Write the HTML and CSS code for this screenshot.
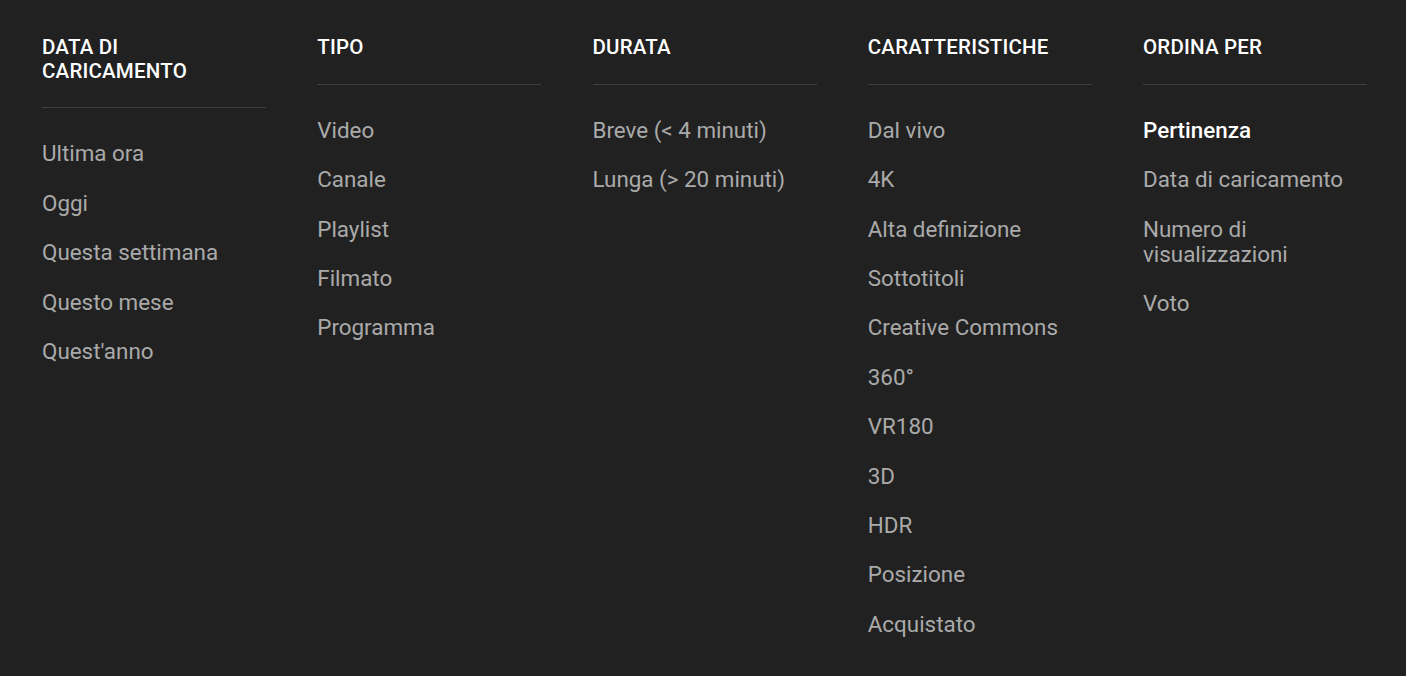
FILE: index.html
```html
<!DOCTYPE html>
<html lang="it">
<head>
<meta charset="utf-8">
<title>Filtri di ricerca</title>
<link rel="stylesheet" href="styles.css">
</head>
<body>
<div class="filters">
  <div class="group">
    <h4 class="group-title">Data di caricamento</h4>
    <ul class="options">
      <li class="option">Ultima ora</li>
      <li class="option">Oggi</li>
      <li class="option">Questa settimana</li>
      <li class="option">Questo mese</li>
      <li class="option">Quest'anno</li>
    </ul>
  </div>
  <div class="group">
    <h4 class="group-title">Tipo</h4>
    <ul class="options">
      <li class="option">Video</li>
      <li class="option">Canale</li>
      <li class="option">Playlist</li>
      <li class="option">Filmato</li>
      <li class="option">Programma</li>
    </ul>
  </div>
  <div class="group">
    <h4 class="group-title">Durata</h4>
    <ul class="options">
      <li class="option">Breve (&lt; 4 minuti)</li>
      <li class="option">Lunga (&gt; 20 minuti)</li>
    </ul>
  </div>
  <div class="group">
    <h4 class="group-title">Caratteristiche</h4>
    <ul class="options">
      <li class="option">Dal vivo</li>
      <li class="option">4K</li>
      <li class="option">Alta definizione</li>
      <li class="option">Sottotitoli</li>
      <li class="option">Creative Commons</li>
      <li class="option">360°</li>
      <li class="option">VR180</li>
      <li class="option">3D</li>
      <li class="option">HDR</li>
      <li class="option">Posizione</li>
      <li class="option">Acquistato</li>
    </ul>
  </div>
  <div class="group">
    <h4 class="group-title">Ordina per</h4>
    <ul class="options">
      <li class="option selected">Pertinenza</li>
      <li class="option">Data di caricamento</li>
      <li class="option">Numero di visualizzazioni</li>
      <li class="option">Voto</li>
    </ul>
  </div>
</div>
</body>
</html>
```
FILE: styles.css
```css
html, body {
  margin: 0;
  padding: 0;
  background: #212121;
}
body {
  font-family: Roboto, "Liberation Sans", Arial, sans-serif;
  color: #aaaaaa;
}
.filters {
  display: flex;
  gap: 51.25px;
  padding: 36.2px 39px 0 42px;
}
.group {
  flex: 1 1 0;
  min-width: 0;
}
.group-title {
  margin: 0;
  font-size: 20.5px;
  line-height: 23.5px;
  letter-spacing: 0.2px;
  font-weight: 500;
  text-transform: uppercase;
  color: #ffffff;
  padding-bottom: 24px;
  border-bottom: 1px solid #3e3e3e;
}
.options {
  list-style: none;
  margin: 21px 0 0;
  padding: 0;
}
.option {
  font-size: 22.4px;
  line-height: 25px;
  padding: 12.2px 0;
  color: #aaaaaa;
}
.option.selected {
  color: #ffffff;
  font-weight: 500;
}
```
